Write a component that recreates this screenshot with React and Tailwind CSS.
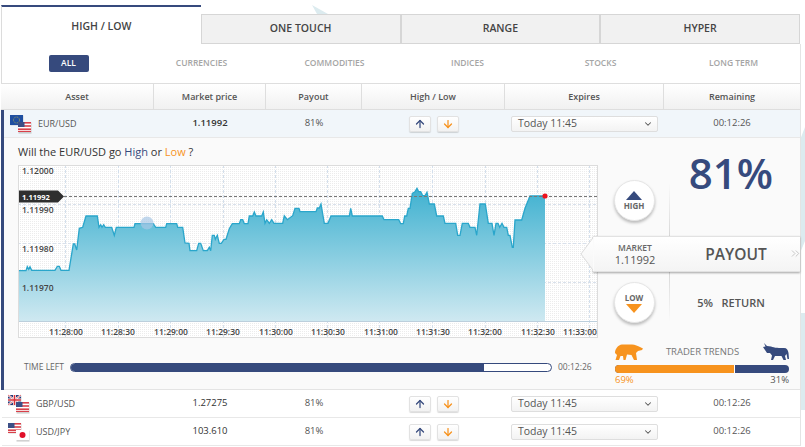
import React from 'react';
import { ArrowUp, ArrowDown, ChevronDown, ChevronsRight } from 'lucide-react';

const tabs = ['ONE TOUCH', 'RANGE', 'HYPER'];
const filters = ['CURRENCIES', 'COMMODITIES', 'INDICES', 'STOCKS', 'LONG TERM'];

// traced from the price line, [x, y] in chart pixels
const left = [[55,362],[78,362],[82,350],[86,358],[90,350],[95,361],[165,361],[172,349],[178,349],[183,361],[207,361],[220,282],[224,282],[230,300],[238,235],[248,232],[258,198],[292,198],[297,232],[302,224],[306,232],[311,224],[316,232],[335,232],[343,256],[349,232],[402,232],[405,221],[460,221],[467,232],[497,232],[500,221],[530,221],[533,232],[548,232],[555,279],[567,280],[570,302],[590,302],[596,280],[602,280],[610,302],[622,302],[628,292],[632,302],[637,256],[643,256],[646,268],[652,256],[658,280],[664,280],[672,268],[678,268],[688,236],[697,221],[718,221],[722,209],[728,209],[733,221],[744,221],[748,198],[758,198],[763,186],[768,198],[785,198],[790,186],[795,220],[800,209],[808,220],[815,209],[822,220],[848,220],[853,197],[862,209],[878,197],[885,175],[897,175]];
const right = [[0,185],[48,185],[52,174],[58,174],[63,162],[73,220],[84,220],[93,198],[148,198],[152,175],[157,198],[247,198],[252,209],[296,209],[302,221],[310,221],[314,198],[320,198],[325,175],[330,175],[337,130],[345,125],[351,115],[356,125],[362,125],[368,137],[375,137],[381,127],[388,162],[403,162],[410,198],[430,198],[435,220],[467,220],[473,256],[480,256],[487,220],[505,220],[510,232],[525,232],[530,256],[540,162],[556,162],[565,220],[576,220],[582,256],[588,220],[594,220],[599,232],[606,220],[612,232],[620,232],[625,256],[630,256],[637,292],[640,292],[645,210],[665,210],[675,175],[690,138],[735,138]];

const points = [
  ...left.map(([x, y]) => [x / 3 - 18, y / 3 - 15]),
  ...right.map(([x, y]) => [x / 3 + 282, y / 3 - 15]),
];
const line = points.map(([x, y]) => `${x.toFixed(1)},${y.toFixed(1)}`).join(' ');
const endX = points[points.length - 1][0];
const endY = points[points.length - 1][1];

const vLines = [47, 100, 152, 205, 257, 309, 361, 414, 467, 519, 571];
const hLines = [39, 78, 117];
const yLabels = [['1.12000', 8.5], ['1.11990', 47.5], ['1.11980', 86.5], ['1.11970', 125.5]];
const xLabels = [['11:28:00', 48], ['11:28:30', 100], ['11:29:00', 153], ['11:29:30', 205], ['11:30:00', 258], ['11:30:30', 310], ['11:31:00', 363], ['11:31:30', 415], ['11:32:00', 467], ['11:32:30', 520], ['11:33:00', 562]];

const Chart = () => (
  <svg width="580" height="173" className="block bg-white" style={{ fontFamily: '"Open Sans", sans-serif' }}>
    <defs>
      <pattern id="dots" width="2" height="2" patternUnits="userSpaceOnUse">
        <rect width="1" height="1" fill="#ececec" />
      </pattern>
      <linearGradient id="fill" x1="0" y1="0" x2="0" y2="1">
        <stop offset="0" stopColor="#3fb1d0" />
        <stop offset="1" stopColor="#cfe9f1" />
      </linearGradient>
    </defs>
    <rect width="580" height="173" fill="url(#dots)" />
    {hLines.map((y) => <line key={y} x1="0" x2="580" y1={y + 0.5} y2={y + 0.5} stroke="#d9e1ec" strokeDasharray="3 2" />)}
    {vLines.map((x) => <line key={x} x1={x + 0.5} x2={x + 0.5} y1="0" y2="173" stroke="#d3dfec" strokeDasharray="3 2" />)}
    <polygon points={`0,156.5 ${line} ${endX},156.5`} fill="url(#fill)" />
    <polyline points={line} fill="none" stroke="#2aa6cb" strokeWidth="1.3" />
    <line x1="0" x2="580" y1="156.5" y2="156.5" stroke="#bccfdc" />
    <line x1="46" x2="580" y1="31.5" y2="31.5" stroke="#777" strokeDasharray="3 2" />
    <circle cx="129" cy="58" r="6.5" fill="#a8c8e6" opacity="0.7" />
    <circle cx={endX} cy={endY} r="2.6" fill="#f0141e" />
    <polygon points="0,25.5 40,25.5 46,31.5 40,37.5 0,37.5" fill="#2f2f2f" />
    <text x="4" y="34.5" fontSize="7.5" fontWeight="700" fill="#fff">1.11992</text>
    {yLabels.map(([t, y]) => <text key={t} x="4" y={y} fontSize="8.5" fontWeight="600" fill="#444">{t}</text>)}
    {xLabels.map(([t, x]) => <text key={t} x={x} y="169.500" textAnchor="middle" fontSize="8.5" fontWeight="600" fill="#444">{t}</text>)}
    <rect x="0.5" y="0.5" width="579" height="172" fill="none" stroke="#dcdcdc" />
  </svg>
);

const UsFlag = ({ x, y }) => (
  <g transform={`translate(${x} ${y})`}>
    <rect width="13" height="10" fill="#fff" />
    <rect width="13" height="1.6" fill="#d8404a" />
    <rect y="3.2" width="13" height="1.6" fill="#d8404a" />
    <rect y="6.4" width="13" height="1.6" fill="#d8404a" />
    <rect y="8.8" width="13" height="1.2" fill="#d8404a" />
    <rect width="6.5" height="5" fill="#3c4f86" />
  </g>
);

const EurFlag = ({ x, y }) => (
  <g transform={`translate(${x} ${y})`}>
    <rect width="13" height="10" fill="#1f4fa0" />
    <circle cx="6.5" cy="5" r="3" fill="none" stroke="#d8c43a" strokeWidth="0.7" strokeDasharray="0.8 0.8" />
  </g>
);

const GbFlag = ({ x, y }) => (
  <g transform={`translate(${x} ${y})`}>
    <rect width="13" height="10" fill="#2a3c78" />
    <path d="M0 0 13 10M13 0 0 10" stroke="#fff" strokeWidth="2" />
    <path d="M0 0 13 10M13 0 0 10" stroke="#d8303a" strokeWidth="0.7" />
    <path d="M6.500 0V10M0 5H13" stroke="#fff" strokeWidth="3" />
    <path d="M6.500 0V10M0 5H13" stroke="#d8303a" strokeWidth="1.6" />
  </g>
);

const JpFlag = ({ x, y }) => (
  <g transform={`translate(${x} ${y})`}>
    <rect width="13" height="10" fill="#fff" />
    <circle cx="6.5" cy="5" r="3" fill="#e0102a" />
  </g>
);

const Flags = ({ pair }) => {
  const Back = pair === 'EUR' ? EurFlag : pair === 'GBP' ? GbFlag : UsFlag;
  const Front = pair === 'USD' ? JpFlag : UsFlag;
  return (
    <svg width="24" height="20" className="shrink-0">
      <rect x="1" y="1" width="13" height="10" fill="#888" opacity="0.35" transform="translate(0.5 0.5)" />
      <Back x={1} y={1} />
      <rect x="9" y="8" width="13" height="11" fill="#999" opacity="0.45" transform="translate(0.5 0.6)" />
      <Front x={9} y={8} />
    </svg>
  );
};

const HighLowButtons = () => (
  <div className="flex justify-center gap-[6px]">
    <button className="flex h-[16px] w-[22px] items-center justify-center rounded-[2px] border border-[#e2e2e2] bg-gradient-to-b from-white to-[#f2f2f2] shadow-[0_1px_1px_rgba(0,0,0,0.15)]">
      <ArrowUp size={12} strokeWidth={2.5} className="text-[#364a7d]" />
    </button>
    <button className="flex h-[16px] w-[22px] items-center justify-center rounded-[2px] border border-[#e2e2e2] bg-gradient-to-b from-white to-[#f2f2f2] shadow-[0_1px_1px_rgba(0,0,0,0.15)]">
      <ArrowDown size={12} strokeWidth={2.5} className="text-[#f7931e]" />
    </button>
  </div>
);

const ExpirySelect = () => (
  <div className="mx-auto flex h-[16px] w-[147px] items-center justify-between rounded-[2px] border border-[#dedede] bg-gradient-to-b from-white to-[#f3f3f3] pl-[6px] pr-[4px] text-[10.5px] text-[#555]">
    Today 11:45
    <ChevronDown size={10} strokeWidth={2.5} className="text-[#555]" />
  </div>
);

const AssetRow = ({ pair, name, price, active }) => (
  <div className={`grid h-[28px] items-center border-b border-[#e8e8e8] text-[9.5px] text-[#555] ${active ? 'grid-cols-[150px_112px_96px_143px_159px_136px] bg-[#f1f6fa]' : 'grid-cols-[152px_112px_96px_143px_159px_136px] bg-white'}`}>
    <div className="flex items-center gap-[5px] pl-[5px] text-[9px]">
      <Flags pair={pair} />
      {name}
    </div>
    <div className={`text-center text-[#333] ${active ? 'font-semibold' : ''}`}>{price}</div>
    <div className="text-center">81%</div>
    <HighLowButtons />
    <ExpirySelect />
    <div className="text-center">00:12:26</div>
  </div>
);

const Bear = () => (
  <svg width="28" height="16" viewBox="0 0 28 16" fill="#f7931e">
    <path d="M0 9C0 5 3 1 7 .5L17 .5C20 .5 23 2 25 3L28 4.500 27 6 23 7 21 9 22 16 19 16 16.500 11 12 10.500 10.500 16H8.500L8 12 5.500 12 4 16H.5L2 11Z" />
  </svg>
);

const Bull = () => (
  <svg width="27" height="18" viewBox="0 0 27 18" fill="#364a7d">
    <path d="M2 0 5 3 9 3.500C12 5 18 5 22 5 25 5 26 7 26.500 10L27 16H25.500L24.500 11 23 13 24 17H21.500L19.500 13H13L11 17H9L10 12.500 8 10H5L3 7 1 4 3.500 3.500Z" />
  </svg>
);

export default function App() {
  return (
    <div className="relative isolate min-h-screen pt-[5px] text-[#444]" style={{ fontFamily: '"Open Sans", sans-serif' }}>
      {/* faint page backdrop showing round the widget */}
      <svg width="805" height="447" className="absolute left-0 top-0 -z-10">
        <polygon points="312,5 328,14 317,14" fill="#dcebef" />
        <polygon points="805,127 800,140 800,253 805,241" fill="#dcebef" />
        <polygon points="800,313 805,313 805,410 800,410" fill="#dcebef" />
      </svg>

      <div className="ml-px w-[799px]">
        {/* product tabs */}
        <div className="grid h-[39px] grid-cols-4">
          <div className="flex items-center justify-center border-l border-t-2 border-t-[#364a7d] border-l-[#dcdcdc] bg-white pt-[2px] text-[10.5px] font-semibold text-[#444]">
            HIGH / LOW
          </div>
          {tabs.map((t) => (
            <div key={t} className="mt-[9px] flex items-center justify-center border border-[#d6d6d6] bg-[#f1f1f1] text-[10.5px] font-semibold text-[#444]">
              {t}
            </div>
          ))}
        </div>

        <div className="shadow-[1px_0_0_#e4e4e4]">
          {/* market filter */}
          <div className="grid h-[39px] grid-cols-6 items-center border-l border-[#dcdcdc] bg-white text-[8.5px] font-semibold text-[#a5a5a5]">
            <div className="flex justify-center">
              <span className="flex h-[17px] w-[40px] items-center justify-center rounded-[2px] bg-[#364a7d] text-white">ALL</span>
            </div>
            {filters.map((f) => <div key={f} className="text-center">{f}</div>)}
          </div>

          {/* table head */}
          <div className="grid h-[27px] grid-cols-[153px_112px_96px_143px_159px_136px] border-y border-[#dedede] bg-gradient-to-b from-white to-[#f1f1f1] text-center text-[9px] font-semibold text-[#555]">
            {['Asset', 'Market price', 'Payout', 'High / Low', 'Expires', 'Remaining'].map((h, i) => (
              <div key={h} className={`flex items-center justify-center ${i < 5 ? 'border-r border-[#dedede]' : ''}`}>{h}</div>
            ))}
          </div>

          {/* open asset */}
          <div className="border-l-[3px] border-[#364a7d]">
            <AssetRow pair="EUR" name="EUR/USD" price="1.11992" active />

            <div className="relative flex h-[252px] border-b border-[#e4e4e4] bg-[#fafafa]">
              <div className="w-[595px] pl-[14px] pt-[6px]">
                <p className="h-[21px] text-[11px] leading-[16px] text-[#333]">
                  Will the EUR/USD go <span className="text-[#364a7d]">High</span> or <span className="text-[#f7931e]">Low</span> ?
                </p>
                <Chart />
                <div className="mt-[23px] flex items-center">
                  <span className="ml-[6px] w-[46px] text-[8.5px] leading-[12px] text-[#666]">TIME LEFT</span>
                  <div className="h-[9px] w-[482px] overflow-hidden rounded-full border border-[#364a7d] bg-white">
                    <div className="h-full w-[86%] bg-[#364a7d]" />
                  </div>
                  <span className="ml-[6px] text-[8.5px] leading-[12px] text-[#666]">00:12:26</span>
                </div>
              </div>

              <div className="flex-1">
                <div className="flex h-[98px]">
                  <div className="flex w-[70px] items-start justify-center pt-[42px]">
                    <div className="flex h-[41px] w-[41px] flex-col items-center justify-center rounded-full border border-[#e6e6e6] bg-white shadow-[0_2px_3px_rgba(0,0,0,0.25)]">
                      <div className="h-0 w-0 border-x-[8px] border-b-[9px] border-x-transparent border-b-[#364a7d]" />
                      <span className="mt-[1px] text-[8px] font-bold leading-[10px] text-[#666]">HIGH</span>
                    </div>
                  </div>
                  <div className="mt-[45px] w-px bg-gradient-to-b from-transparent to-[#d8d8d8]" />
                  <div className="flex-1 pr-[8px] pt-[5px] text-center text-[42px] font-semibold leading-[60px] text-[#364a7d]">81%</div>
                </div>
                <div className="h-[36px]" />
                <div className="flex h-[62px]">
                  <div className="flex w-[70px] items-start justify-center pt-[10px]">
                    <div className="flex h-[41px] w-[41px] flex-col items-center justify-center rounded-full border border-[#e6e6e6] bg-white shadow-[0_2px_3px_rgba(0,0,0,0.25)]">
                      <span className="text-[8px] font-bold leading-[10px] text-[#666]">LOW</span>
                      <div className="mt-[1px] h-0 w-0 border-x-[8px] border-t-[9px] border-x-transparent border-t-[#f7931e]" />
                    </div>
                  </div>
                  <div className="mb-[12px] w-px bg-gradient-to-b from-[#d8d8d8] to-transparent" />
                  <div className="flex-1 pr-[8px] pt-[23px] text-center text-[11px] font-semibold text-[#555]">5%&nbsp;&nbsp; RETURN</div>
                </div>
                <div className="pl-[16px] pr-[11px] pt-[9px]">
                  <div className="flex items-center justify-between">
                    <Bear />
                    <span className="text-[9.5px] leading-[12px] text-[#777]">TRADER TRENDS</span>
                    <Bull />
                  </div>
                  <div className="mt-[4px] flex h-[8px] overflow-hidden rounded-full bg-[#364a7d]">
                    <div className="w-[69%] border-r border-white bg-[#f7931e]" />
                  </div>
                  <div className="flex justify-between text-[9.5px] leading-[14px]">
                    <span className="text-[#f7931e]">69%</span>
                    <span className="text-[#555]">31%</span>
                  </div>
                </div>
              </div>

              {/* payout ribbon sits over the chart edge */}
              <div className="absolute right-0 top-[98px] flex h-[36px] w-[207px] items-center border-y border-[#e2e2e2] bg-gradient-to-b from-white to-[#f4f4f4] shadow-[0_1px_2px_rgba(0,0,0,0.35)]">
                <svg width="14" height="36" className="absolute left-[-13px] top-[-1px]">
                  <defs>
                    <linearGradient id="tip" x1="0" y1="0" x2="0" y2="1">
                      <stop offset="0" stopColor="#ffffff" />
                      <stop offset="1" stopColor="#f4f4f4" />
                    </linearGradient>
                  </defs>
                  <polygon points="14,0.5 1,18 14,35.5" fill="url(#tip)" stroke="#dcdcdc" />
                  <rect x="13" y="1" width="2" height="34" fill="#fbfbfb" />
                </svg>
                <div className="w-[84px] text-center">
                  <div className="text-[8.5px] font-semibold leading-[11px] text-[#666]">MARKET</div>
                  <div className="text-[11px] leading-[13px] text-[#555]">1.11992</div>
                </div>
                <div className="flex-1 pr-[5px] pt-[2px] text-center text-[15.5px] font-semibold text-[#555]">PAYOUT</div>
                <ChevronsRight size={13} strokeWidth={1.5} className="absolute right-[-2px] top-[10px] text-[#bbb]" />
              </div>
            </div>
          </div>

          <div className="pl-px">
            <AssetRow pair="GBP" name="GBP/USD" price="1.27275" />
            <AssetRow pair="USD" name="USD/JPY" price="103.610" />
          </div>
        </div>
      </div>
    </div>
  );
}
